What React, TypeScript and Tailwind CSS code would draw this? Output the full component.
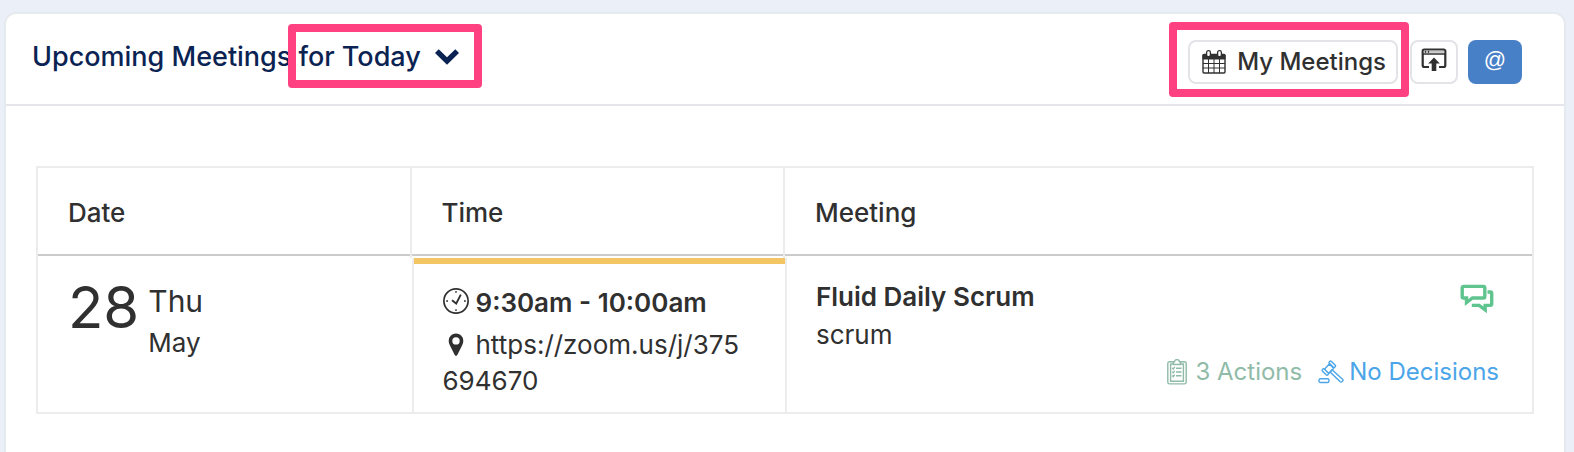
import type { ReactNode } from "react";

const columns = [
  { label: "Date", cell: "w-1/4 border-r-2" },
  { label: "Time", cell: "w-1/4 border-r-2" },
  { label: "Meeting", cell: "w-1/2" },
];

function Highlight({ className }: { className: string }) {
  return (
    <span
      aria-hidden="true"
      className={`pointer-events-none absolute rounded border-8 border-[#ff4081] ${className}`}
    />
  );
}

function ChevronIcon() {
  return (
    <svg width="24" height="16" viewBox="0 0 24 16" aria-hidden="true">
      <path d="M3.7 .3 12 8.3 20.300 .3 24 4 12 15.700 0 4Z" fill="currentColor" />
    </svg>
  );
}

function CalendarIcon() {
  return (
    <svg width="24" height="24" viewBox="0 0 24 24" fill="none" stroke="currentColor" aria-hidden="true">
      <path d="M1 5.500a1 1 0 0 1 1-1h20a1 1 0 0 1 1 1V9H1Z" fill="currentColor" />
      <rect x="1" y="4.500" width="22" height="18.500" rx="1" strokeWidth="1.400" />
      <path d="M1 13.500h22M1 18h22M6.500 9v14M12 9v14M17.500 9v14" strokeWidth="1" />
      <rect x="4.600" y="0.700" width="3.800" height="6" rx="1.700" fill="#fff" strokeWidth="1.300" />
      <rect x="15.600" y="0.700" width="3.800" height="6" rx="1.700" fill="#fff" strokeWidth="1.300" />
    </svg>
  );
}

function WindowUploadIcon() {
  return (
    <svg width="26" height="24" viewBox="0 0 26 24" fill="none" stroke="currentColor" aria-hidden="true">
      <path d="M8 19H3.500A1.800 1.800 0 0 1 1.700 17.200V3A1.500 1.500 0 0 1 3.200 1.500h19.600A1.500 1.500 0 0 1 24.300 3v14.200a1.800 1.800 0 0 1-1.800 1.800H18" strokeWidth="2.200" />
      <path d="M2 6h22" strokeWidth="1.500" />
      <path d="M2.700 3.800h20.600" stroke="#c4c4c4" strokeWidth="2" />
      <path d="M4.500 2.800v2M7.500 2.800v2" strokeWidth="1.200" />
      <path d="m13 9.500 5.800 6h-3.500V23h-4.600v-7.500H7.200Z" fill="currentColor" stroke="none" />
    </svg>
  );
}

function ClockIcon() {
  return (
    <svg width="26" height="26" viewBox="0 0 26 26" fill="none" stroke="currentColor" aria-hidden="true">
      <circle cx="13" cy="13" r="12.100" strokeWidth="1.700" />
      <path d="M13 3v1.800M13 21.200V23M3.200 13H5M21 13h1.800" strokeWidth="1.400" />
      <path d="m9 12.300 4.200 3.300 4.600-9" strokeWidth="1.900" />
    </svg>
  );
}

function PinIcon() {
  return (
    <svg width="26" height="24" viewBox="0 0 26 24" aria-hidden="true">
      <path
        fillRule="evenodd"
        fill="currentColor"
        d="M13 .500a7.200 7.200 0 0 0-7.300 7.200c0 2 .7 3.500 1.500 5.200l4.500 9.200a1.450 1.450 0 0 0 2.600 0l4.500-9.200c.8-1.700 1.500-3.200 1.500-5.200A7.200 7.200 0 0 0 13 .500Zm0 3.700a3.700 3.700 0 1 1 0 7.400 3.700 3.700 0 0 1 0-7.400Z"
      />
    </svg>
  );
}

function ChatIcon() {
  return (
    <svg width="34" height="30" viewBox="0 0 34 30" fill="none" stroke="currentColor" strokeWidth="3.400" aria-hidden="true">
      <path d="M3.500 2.400h20a1.300 1.300 0 0 1 1.300 1.300v9a1.300 1.300 0 0 1-1.300 1.300H12.500L6.500 18.600V14H3.500A1.300 1.300 0 0 1 2.200 12.700V3.700a1.300 1.300 0 0 1 1.300-1.300Z" />
      <path d="M27.500 8h2.900a1.300 1.300 0 0 1 1.300 1.300v10.800a1.300 1.300 0 0 1-1.300 1.300h-5.200v4.400l-6-4.400h-7.400" />
    </svg>
  );
}

function ClipboardIcon() {
  return (
    <svg width="20" height="26" viewBox="0 0 20 26" fill="none" stroke="currentColor" strokeWidth="1.400" aria-hidden="true">
      <path d="M6 2.800H2.500A1.700 1.700 0 0 0 .8 4.500v18.700a1.700 1.700 0 0 0 1.700 1.700h15a1.700 1.700 0 0 0 1.700-1.700V4.500a1.700 1.700 0 0 0-1.700-1.700H14" />
      <path d="M6 5H3.600v17.300h12.800V5H14" />
      <path d="M6.500 2.800h1a2.500 2.200 0 0 1 5 0h1v2.700h-7Z" />
      <path d="m5.200 9 1 1 1.500-2M9 9.200h5.500m-9.300 3.600 1 1 1.500-2M9 13h5.500m-9.300 3.600 1 1 1.500-2M9 16.800h5.500" />
    </svg>
  );
}

function GavelIcon() {
  return (
    <svg width="26" height="24" viewBox="0 0 26 24" fill="none" stroke="currentColor" strokeWidth="1.400" strokeLinejoin="round" aria-hidden="true">
      <rect x="1" y="18.700" width="10" height="3.800" rx="1.600" />
      <path d="m6.300 9.400 5-5.400 4.400 4.200-5 5.400Z" />
      <rect x="-3.800" y="-1.400" width="7.600" height="2.800" rx="1.300" fill="#fff" transform="translate(14.300 4.300) rotate(44)" />
      <rect x="-3.800" y="-1.400" width="7.600" height="2.800" rx="1.300" fill="#fff" transform="translate(7.300 12) rotate(44)" />
      <path d="m12 11.900 2-2.100 10.300 9.100a1.700 1.700 0 0 1-2.300 2.600Z" />
    </svg>
  );
}

function HeaderButton({ className, label, children }: { className: string; label?: string; children: ReactNode }) {
  return (
    <button type="button" aria-label={label} className={`flex h-11 items-center justify-center rounded-lg ${className}`}>
      {children}
    </button>
  );
}

export default function App() {
  return (
    <div className="flex min-h-screen flex-col bg-[#ebeff7] pt-[14px] pr-[10px] pl-[6px] font-['Inter',sans-serif] text-[26px] leading-9 text-[#303030]">
      <section className="grow rounded-t-[10px] bg-white shadow-[0_0_0_2px_#e5eaef]">
        <header className="flex h-[92px] items-center justify-between border-b-2 border-[#e5e6eb] pr-[42px] pl-[26px]">
          <h1 className="flex pb-1 text-[27px] font-medium text-[#0b2353]">
            Upcoming Meetings
            <button type="button" className="relative ml-[7px] flex items-center gap-[14px]">
              for Today
              <ChevronIcon />
              <Highlight className="-top-[15px] -right-[23px] -left-[10px] h-16" />
            </button>
          </h1>
          <div className="flex items-center pt-[5px]">
            <div className="relative">
              <HeaderButton className="gap-[11px] border-2 border-[#e3e3e8] pr-[10px] pl-3 text-[24px] font-medium">
                <CalendarIcon />
                My Meetings
              </HeaderButton>
              <Highlight className="-top-[18px] -right-[11px] -left-[19px] h-[75px]" />
            </div>
            <HeaderButton label="Open in window" className="ml-3 w-12 border-2 border-[#e3e3e8] pb-1">
              <WindowUploadIcon />
            </HeaderButton>
            <HeaderButton className="ml-[10px] w-[54px] bg-[#4880c8] pb-1 font-['Liberation_Sans',sans-serif] text-[22px] text-white">
              @
            </HeaderButton>
          </div>
        </header>

        <div className="px-[30px] pt-[60px]">
          <table className="w-full table-fixed border-separate border-spacing-0 border-2 border-[#ececec] text-left">
            <thead>
              <tr>
                {columns.map((column) => (
                  <th key={column.label} scope="col" className={`border-[#ececec] p-0 pb-[2px] font-medium ${column.cell}`}>
                    <div className="flex h-[88px] items-center border-b-2 border-[#cbcbcb] px-[30px] pt-1">{column.label}</div>
                  </th>
                ))}
              </tr>
            </thead>
            <tbody>
              <tr className="h-[154px] align-top">
                <td className="px-[30px] pt-[19px]">
                  <div className="flex gap-[9px]">
                    <span className="text-[58px] leading-[60px]">28</span>
                    <div className="flex flex-col pt-1">
                      <span className="text-[30px] leading-10">Thu</span>
                      <span className="leading-[44px]">May</span>
                    </div>
                  </div>
                </td>
                <td className="border-l-2 border-[#ececec] p-0">
                  <div className="border-t-[6px] border-[#f4c563] pt-[19px] pr-10 pl-[29px]">
                    <div className="flex gap-[7px] leading-10 font-semibold">
                      <span className="pt-[5px]">
                        <ClockIcon />
                      </span>
                      9:30am - 10:00am
                    </div>
                    <a href="https://zoom.us/j/375694670" className="block pt-1 break-all">
                      <span className="mr-[7px] inline-flex align-[-3px]">
                        <PinIcon />
                      </span>
                      https://zoom.us/j/375694670
                    </a>
                  </div>
                </td>
                <td className="border-l-2 border-[#ececec] pt-[19px] pr-[33px] pl-[29px]">
                  <div className="flex justify-between">
                    <div>
                      <h2 className="leading-[40px] font-semibold">Fluid Daily Scrum</h2>
                      <p>scrum</p>
                    </div>
                    <button type="button" aria-label="Meeting chat" className="mt-[7px] mr-[5px] h-[30px] text-[#60c48f]">
                      <ChatIcon />
                    </button>
                  </div>
                  <div className="flex justify-end gap-4 pt-px text-[24px]">
                    <a href="#actions" className="flex items-center gap-2 text-[#90bba8]">
                      <ClipboardIcon />
                      3 Actions
                    </a>
                    <a href="#decisions" className="flex items-center gap-[5px] text-[#4ba5e8]">
                      <GavelIcon />
                      No Decisions
                    </a>
                  </div>
                </td>
              </tr>
            </tbody>
          </table>
        </div>
      </section>
    </div>
  );
}
